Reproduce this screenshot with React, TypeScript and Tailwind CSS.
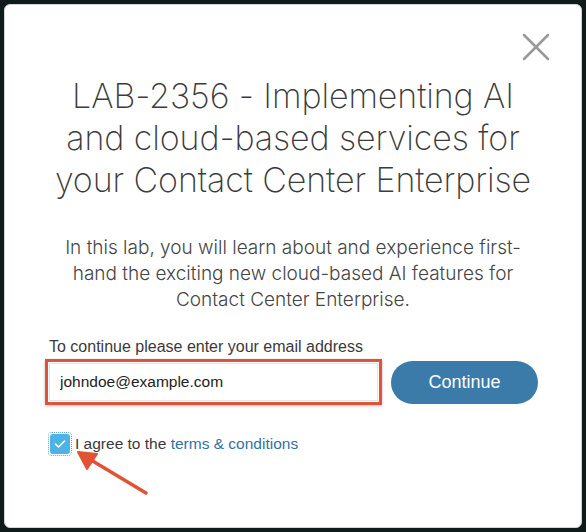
import React, { useState } from 'react';

// 닫기 아이콘
function CloseIcon() {
  return (
    <svg width="30" height="30" viewBox="0 0 30 30" fill="none">
      <path d="M3 3 L27 27 M27 3 L3 27" stroke="#9a9a9a" strokeWidth="2.6" strokeLinecap="round" />
    </svg>
  );
}

// 빨간 화살표 (주석용)
function RedArrow() {
  return (
    <svg className="absolute left-[70px] top-[444px]" width="84" height="56" viewBox="0 0 84 56" fill="none">
      <path d="M76 49 L16 13" stroke="#e05335" strokeWidth="3.5" strokeLinecap="round" />
      <path d="M8 8 L27 10 L17 25 Z" fill="#e05335" stroke="#e05335" strokeWidth="2" strokeLinejoin="round" />
    </svg>
  );
}

export default function App() {
  const [email, setEmail] = useState('johndoe@example.com');
  const [agreed, setAgreed] = useState(true);

  return (
    <div className="relative w-[586px] h-[532px] bg-[#0f1a1b] p-[4px] overflow-hidden">
      <div className="h-full bg-white rounded-[6px] border border-[#d4d4d4] flex flex-col font-['Liberation_Sans',Arial,sans-serif]">
        <div className="flex justify-end pt-[27px] pr-[30px]">
          <button className="w-[30px] h-[30px]" aria-label="close">
            <CloseIcon />
          </button>
        </div>

        <h1 className="mt-[13px] text-center text-[34px] leading-[42px] font-extralight text-[#3c3c3c] font-['Inter',sans-serif] tracking-[-0.1px]">
          LAB-2356 - Implementing AI
          <br />
          and cloud-based services for
          <br />
          your Contact Center Enterprise
        </h1>

        <p className="mt-[34px] px-[50px] text-center text-[19px] leading-[26px] font-light text-[#454545] font-['Inter',sans-serif]">
          In this lab, you will learn about and experience first-hand the exciting new cloud-based AI features for Contact Center Enterprise.
        </p>

        <div className="mt-[25px] px-[40px]">
          <label className="block pl-[4px] text-[16px] leading-[18px] text-[#3a3a3a]">
            To continue please enter your email address
          </label>
          <div className="mt-[3px] flex items-center gap-[9px]">
            <div className="w-[337px] h-[46px] border-[3px] border-[#e0533b] p-[1px] shadow-[0_1px_3px_rgba(0,0,0,0.25)]">
              <input
                value={email}
                onChange={(e) => setEmail(e.target.value)}
                className="w-full h-full border border-[#e4e4e4] px-[10px] text-[15.5px] text-[#222] outline-none font-['Liberation_Sans',Arial,sans-serif]"
              />
            </div>
            <button className="w-[147px] h-[43px] rounded-full bg-[#3a7baa] text-white text-[18px] mt-[1px]">
              Continue
            </button>
          </div>

          <div className="mt-[27px] flex items-center gap-[3px] pl-[3px]">
            <button
              onClick={() => setAgreed(!agreed)}
              className="w-[24px] h-[24px] rounded-[4px] border border-dotted border-[#5aa6d8] p-[1px]"
            >
              <span className="flex w-full h-full items-center justify-center rounded-[3px] bg-[#4eb2e4]">
                {agreed && (
                  <svg width="12" height="10" viewBox="0 0 12 10" fill="none">
                    <path d="M1.5 5 L4.5 8 L10.5 2" stroke="white" strokeWidth="1.6" strokeLinecap="round" strokeLinejoin="round" />
                  </svg>
                )}
              </span>
            </button>
            <span className="text-[15.5px] text-[#3a3a3a]">
              I agree to the <a className="text-[#2f72a8]">terms &amp; conditions</a>
            </span>
          </div>
        </div>
      </div>
      <RedArrow />
    </div>
  );
}
